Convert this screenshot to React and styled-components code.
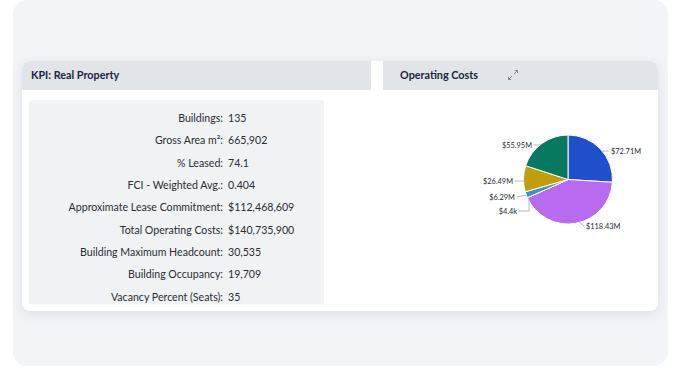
import React from "react";
import styled, { createGlobalStyle } from "styled-components";

const GlobalStyle = createGlobalStyle`
  html, body {
    margin: 0;
    padding: 0;
    background: #ffffff;
    font-family: Lato, "Open Sans", sans-serif;
  }
`;

const kpis = [
  ["Buildings:", "135"],
  ["Gross Area m²:", "665,902"],
  ["% Leased:", "74.1"],
  ["FCI - Weighted Avg.:", "0.404"],
  ["Approximate Lease Commitment:", "$112,468,609"],
  ["Total Operating Costs:", "$140,735,900"],
  ["Building Maximum Headcount:", "30,535"],
  ["Building Occupancy:", "19,709"],
  ["Vacancy Percent (Seats):", "35"],
];

const slices = [
  { value: 72.71, color: "#1f4fcc", label: "$72.71M", tx: 228, ty: 63.5, anchor: "start", line: "219,61 226,61" },
  { value: 118.43, color: "#b86af0", label: "$118.43M", tx: 203, ty: 138.5, anchor: "start", line: "195,131 201,136" },
  { value: 0.0044, color: "#e0e0e0", label: "$4.4k", tx: 134, ty: 123.5, anchor: "end", line: "136,121 146,121 146,109" },
  { value: 6.29, color: "#3f8fd8", label: "$6.29M", tx: 132, ty: 109.5, anchor: "end", line: "134,107 143,105" },
  { value: 26.49, color: "#c29f0a", label: "$26.49M", tx: 130, ty: 93.5, anchor: "end", line: "132,91 141,91" },
  { value: 55.95, color: "#07795f", label: "$55.95M", tx: 149, ty: 57.5, anchor: "end", line: "151,55 158,55" },
];

const Page = styled.div`
  height: 369px;
  padding: 0 13px;
  box-sizing: border-box;
`;

const Panel = styled.div`
  height: 366px;
  background: #f3f4f7;
  border-radius: 14px;
  padding: 61px 10px 0 9px;
  box-sizing: border-box;
`;

const Card = styled.div`
  height: 250px;
  background: #ffffff;
  border-radius: 8px;
  box-shadow: 0 3px 12px rgba(30, 40, 60, 0.1);
  display: flex;
  gap: 12px;
  overflow: hidden;
`;

const Section = styled.section`
  display: flex;
  flex-direction: column;
  width: ${(p) => (p.$width ? `${p.$width}px` : "auto")};
  flex: ${(p) => (p.$width ? "none" : "1")};
  min-width: 0;
`;

const Header = styled.div`
  height: 29px;
  flex: none;
  box-sizing: border-box;
  padding-bottom: 3px;
  background: #e1e4e8;
  display: flex;
  align-items: center;
  gap: 29px;
  padding-left: ${(p) => p.$pad}px;
  border-top-left-radius: ${(p) => (p.$first ? "8px" : "0")};
  border-top-right-radius: ${(p) => (p.$first ? "0" : "8px")};
`;

const Title = styled.h3`
  margin: 0;
  font-size: 10.8px;
  font-weight: 700;
  color: #1c2541;
`;

const ExpandButton = styled.span`
  display: flex;
  width: 12px;
  height: 12px;
  margin-top: 2px;
  color: #7a7f88;
`;

const Body = styled.div`
  flex: 1;
  padding: 10px 0 7px 7px;
  min-height: 0;
  display: flex;
`;

const KpiBox = styled.div`
  width: 295px;
  background: #f1f2f4;
  border-radius: 4px 4px 0 0;
  padding-top: 7px;
  box-sizing: border-box;
  overflow: hidden;
  display: grid;
  grid-template-columns: 194px 1fr;
  grid-auto-rows: 22.3px;
  column-gap: 5px;
  align-items: center;
  align-content: start;
  font-size: 10.6px;
  color: #2a2d33;
`;

const Label = styled.span`
  text-align: right;
  white-space: nowrap;
`;

const Value = styled.span`
  white-space: nowrap;
`;

const ChartArea = styled.div`
  flex: 1;
`;

const ExpandIcon = () => (
  <svg width="12" height="12" viewBox="0 0 12 12" fill="none" stroke="currentColor" strokeWidth="0.9">
    <path d="M7 5 L10.5 1.5 M7.8 1.5 H10.5 V4.2" />
    <path d="M5 7 L1.5 10.5 M1.5 7.8 V10.5 H4.2" />
  </svg>
);

const PieChart = () => {
  const cx = 185;
  const cy = 89.5;
  const r = 44.5;
  const total = slices.reduce((s, d) => s + d.value, 0);
  let start = 0;
  const pt = (a) => [cx + r * Math.sin(a), cy - r * Math.cos(a)];
  return (
    <svg width="275" height="221" viewBox="0 0 275 221">
      {slices.map((d) => {
        const a0 = start;
        const a1 = start + (d.value / total) * Math.PI * 2;
        start = a1;
        const [x0, y0] = pt(a0);
        const [x1, y1] = pt(a1);
        const large = a1 - a0 > Math.PI ? 1 : 0;
        return (
          <path
            key={d.label}
            d={`M${cx},${cy} L${x0},${y0} A${r},${r} 0 ${large} 1 ${x1},${y1} Z`}
            fill={d.color}
            stroke="#ffffff"
            strokeWidth="1"
          />
        );
      })}
      {slices.map((d) => (
        <g key={d.label + "l"}>
          <polyline points={d.line} fill="none" stroke="#a3a6ab" strokeWidth="0.8" />
          <text
            x={d.tx}
            y={d.ty}
            textAnchor={d.anchor}
            fontSize="7.4"
            fontFamily="Lato, sans-serif"
            fill="#2a2d33"
          >
            {d.label}
          </text>
        </g>
      ))}
    </svg>
  );
};

export default function App() {
  return (
    <>
      <GlobalStyle />
      <Page>
        <Panel>
          <Card>
            <Section $width={349}>
              <Header $pad={9} $first>
                <Title>KPI: Real Property</Title>
              </Header>
              <Body>
                <KpiBox>
                  {kpis.map(([k, v]) => (
                    <React.Fragment key={k}>
                      <Label>{k}</Label>
                      <Value>{v}</Value>
                    </React.Fragment>
                  ))}
                </KpiBox>
              </Body>
            </Section>
            <Section>
              <Header $pad={17}>
                <Title>Operating Costs</Title>
                <ExpandButton>
                  <ExpandIcon />
                </ExpandButton>
              </Header>
              <ChartArea>
                <PieChart />
              </ChartArea>
            </Section>
          </Card>
        </Panel>
      </Page>
    </>
  );
}
